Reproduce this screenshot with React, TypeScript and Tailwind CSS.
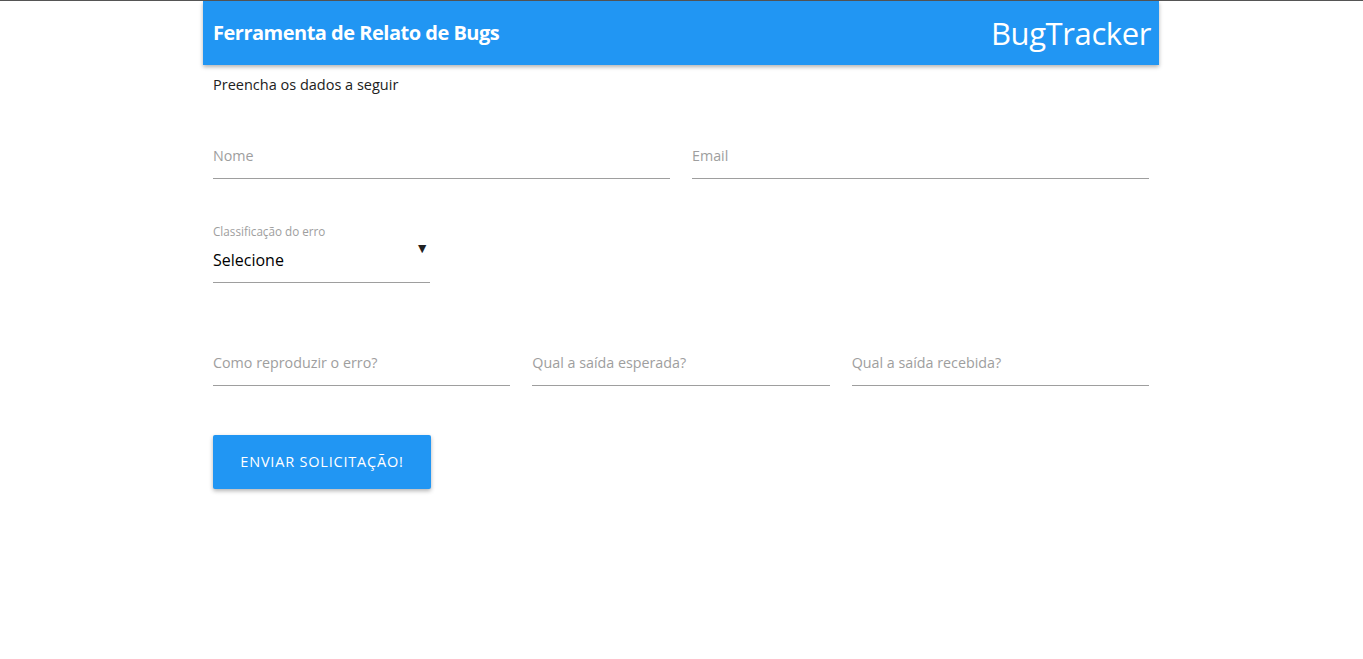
import { useState } from 'react';

interface Campo {
  id: string;
  label: string;
}

const camposTopo: Campo[] = [
  { id: 'nome', label: 'Nome' },
  { id: 'email', label: 'Email' },
];

const camposErro: Campo[] = [
  { id: 'reproduzir', label: 'Como reproduzir o erro?' },
  { id: 'esperada', label: 'Qual a saída esperada?' },
  { id: 'recebida', label: 'Qual a saída recebida?' },
];

function CampoTexto({ campo }: { campo: Campo }) {
  return (
    <div className="flex flex-col">
      <input
        id={campo.id}
        placeholder={campo.label}
        className="h-[34px] w-full border-b border-b-[#9e9e9e] bg-transparent pb-[12px] text-[14.3px] text-black outline-none placeholder:text-[#9e9e9e]"
      />
    </div>
  );
}

export default function App() {
  const [classificacao, setClassificacao] = useState('Selecione');

  return (
    <div
      className="min-h-screen border-t border-t-[#555555] bg-white"
      style={{ fontFamily: '"Open Sans", "Noto Sans", sans-serif' }}
    >
      <div className="ml-[203px] w-[956px]">
        {/* Cabeçalho */}
        <header className="flex h-[64px] items-center justify-between bg-[#2196f3] pl-[10px] pr-[8px] text-white shadow-[0_2px_4px_rgba(0,0,0,0.3)]">
          <h1 className="text-[20px] font-bold tracking-[-0.5px]">Ferramenta de Relato de Bugs</h1>
          <span className="text-[31px] font-normal tracking-[-0.4px]">BugTracker</span>
        </header>

        <div className="px-[10px]">
          <p className="mt-[9px] text-[14.5px] text-[#212121]">Preencha os dados a seguir</p>

          <div className="mt-[49px] grid grid-cols-2 gap-[22px]">
            {camposTopo.map((campo) => (
              <CampoTexto key={campo.id} campo={campo} />
            ))}
          </div>

          {/* Classificação */}
          <div className="mt-[44px] w-[217px]">
            <label className="block text-[11.7px] leading-[16px] text-[#9e9e9e]">Classificação do erro</label>
            <div className="relative flex h-[44px] items-center border-b border-b-[#9e9e9e]">
              <span className="text-[16px] text-black">{classificacao}</span>
              <button
                onClick={() => setClassificacao('Selecione')}
                className="absolute right-[1px] top-[0px] text-[14px] leading-[18px] text-[#222]"
              >
                ▼
              </button>
            </div>
          </div>

          <div className="mt-[69px] grid grid-cols-3 gap-[22px]">
            {camposErro.map((campo) => (
              <CampoTexto key={campo.id} campo={campo} />
            ))}
          </div>

          <button className="mt-[49px] h-[54px] w-[218px] rounded-[2px] bg-[#2196f3] text-[14.5px] tracking-[0.8px] text-white shadow-[0_2px_4px_rgba(0,0,0,0.3)]">
            ENVIAR SOLICITAÇÃO!
          </button>
        </div>
      </div>
    </div>
  );
}
